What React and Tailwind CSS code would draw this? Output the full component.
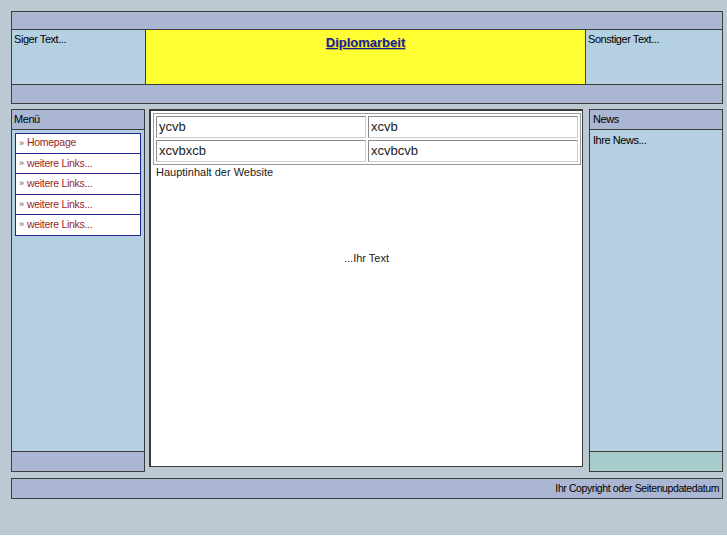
const lav = "bg-[#abb6d2]";

const MenuItem = ({ label, first }) => (
  <div
    className={`h-[20.6px] flex items-center pl-[3px] bg-white border-x border-b border-[#24248f] ${
      first ? "border-t" : ""
    }`}
  >
    <span className="text-[#555] text-[9px] mr-[3px]">»</span>
    <span className="text-[#9a1f1f] text-[10.5px] tracking-[-0.3px]">{label}</span>
  </div>
);

const Cell = ({ children }) => (
  <td className="border border-[#8a8a8a] border-r-[#cfcfcf] border-b-[#cfcfcf] px-[2px] h-[22px] text-[13px] text-[#222]">
    {children}
  </td>
);

export default function App() {
  return (
    <div
      className="w-[727px] h-[535px] bg-[#bcc8d2] pt-[11px] pl-[11px] text-black"
      style={{ fontFamily: '"Liberation Sans", Arial, sans-serif' }}
    >
      {/* Kopf */}
      <div className="w-[712px] border border-[#3c3c3c] flex flex-col">
        <div className={`h-[18px] ${lav} border-b border-[#3c3c3c]`} />
        <div className="h-[55px] flex border-b border-[#3c3c3c]">
          <div className="w-[134px] bg-[#b4d0e2] border-r border-[#3c3c3c] text-[11px] tracking-[-0.45px] leading-[15px] pl-[2px] pt-[2px]">
            Siger Text...
          </div>
          <div className="flex-1 bg-[#ffff33] border-r border-[#3c3c3c] text-center pt-[3px] leading-[18px]">
            <span
              className="text-[13px] font-bold underline text-[#1b1b9a]"
              style={{ textShadow: "1px 1px 1px rgba(0,0,0,0.25)" }}
            >
              Diplomarbeit
            </span>
          </div>
          <div className="w-[136px] bg-[#b4d0e2] text-[11px] tracking-[-0.45px] leading-[15px] pl-[2px] pt-[2px]">
            Sonstiger Text...
          </div>
        </div>
        <div className={`h-[18px] ${lav}`} />
      </div>

      {/* Hauptbereich */}
      <div className="flex mt-[5px] w-[712px]">
        <div className="w-[134px] h-[363px] border border-[#3c3c3c] flex flex-col bg-[#b4d0e2]">
          <div className={`h-[20px] ${lav} border-b border-[#3c3c3c] text-[11px] tracking-[-0.45px] pl-[2px] flex items-center`}>
            Menü
          </div>
          <div className="flex-1 pt-[3px] pl-[3px] pr-[3px]">
            <MenuItem label="Homepage" first />
            <MenuItem label="weitere Links..." />
            <MenuItem label="weitere Links..." />
            <MenuItem label="weitere Links..." />
            <MenuItem label="weitere Links..." />
          </div>
          <div className={`h-[20px] ${lav} border-t border-[#3c3c3c]`} />
        </div>

        <div className="ml-[4px] w-[434px] h-[358px] bg-white border border-[#3c3c3c] border-l-2 border-t-2 p-[2px] flex flex-col">
          <table className="w-[428px] border border-[#9a9a9a] border-separate border-spacing-[2px]">
            <tbody>
              <tr>
                <Cell>ycvb</Cell>
                <Cell>xcvb</Cell>
              </tr>
              <tr>
                <Cell>xcvbxcb</Cell>
                <Cell>xcvbcvb</Cell>
              </tr>
            </tbody>
          </table>
          <div className="text-[11px] leading-[15px] pl-[3px] text-[#222]">Hauptinhalt der Website</div>
          <div className="text-[11px] text-center mt-[70px] text-[#222]">...Ihr Text</div>
        </div>

        <div className="ml-[6px] w-[134px] h-[363px] border border-[#3c3c3c] flex flex-col bg-[#b4d0e2]">
          <div className={`h-[20px] ${lav} border-b border-[#3c3c3c] text-[11px] tracking-[-0.45px] pl-[3px] flex items-center`}>
            News
          </div>
          <div className="flex-1 text-[11px] tracking-[-0.45px] pl-[3px] pt-[2px]">Ihre News...</div>
          <div className="h-[20px] bg-[#a8cbcb] border-t border-[#3c3c3c]" />
        </div>
      </div>

      {/* Fuss */}
      <div className={`mt-[6px] w-[712px] h-[21px] ${lav} border border-[#3c3c3c] text-[10.5px] tracking-[-0.4px] text-right pr-[3px] flex items-center justify-end`}>
        Ihr Copyright oder Seitenupdatedatum
      </div>
    </div>
  );
}
